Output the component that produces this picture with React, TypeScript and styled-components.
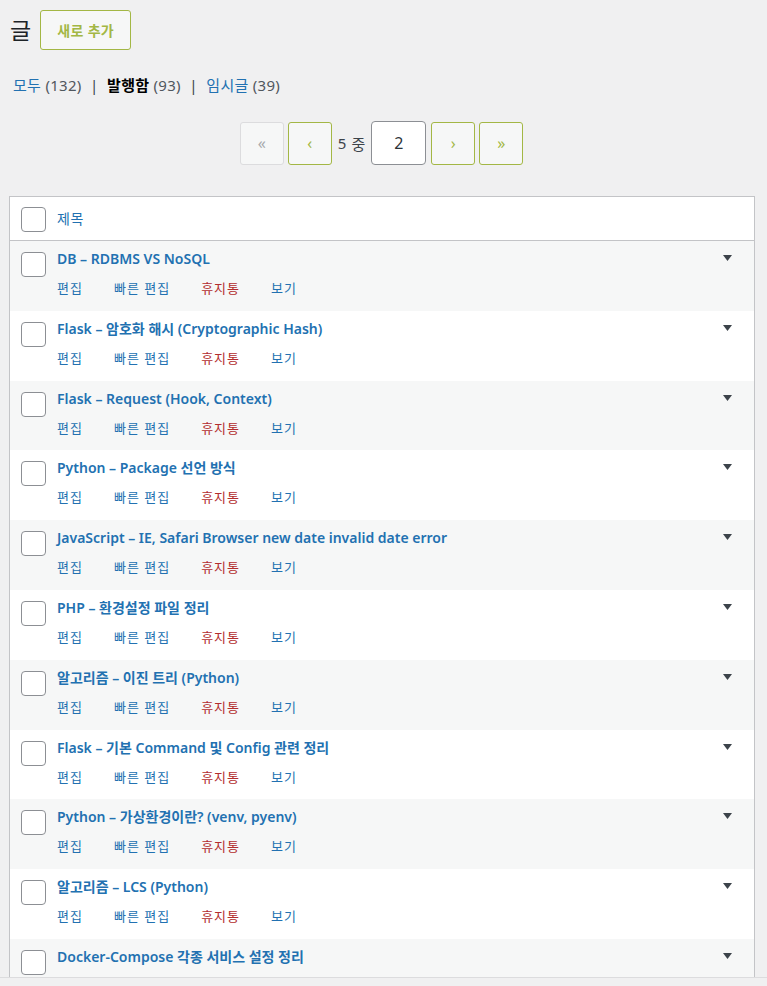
import React from 'react'
import styled, { createGlobalStyle } from 'styled-components'

const GlobalStyle = createGlobalStyle`
  html, body {
    margin: 0;
    padding: 0;
    background: #f0f0f1;
    font-family: "Noto Sans", "Noto Sans CJK KR", sans-serif;
    color: #3c434a;
  }
`

const linkBlue = '#2271b1'
const olive = '#a3b745'

const Page = styled.div`
  padding: 10px 13px 0 9px;
`

const Header = styled.div`
  display: flex;
  align-items: center;
  gap: 9px;
  padding-left: 1px;
`

const Title = styled.h1`
  margin: 0;
  font-size: 23px;
  font-weight: 400;
  color: #1d2327;
  line-height: 40px;
`

const AddButton = styled.a`
  display: inline-flex;
  align-items: center;
  justify-content: center;
  box-sizing: border-box;
  width: 91px;
  height: 40px;
  border: 1px solid ${olive};
  border-radius: 3px;
  background: #f6f7f7;
  color: ${olive};
  font-size: 14px;
  font-weight: 600;
  letter-spacing: 0.3px;
`

const Filters = styled.ul`
  display: flex;
  list-style: none;
  margin: 23px 0 0 4px;
  padding: 0;
  font-size: 15px;
  line-height: 24px;
  letter-spacing: 0.3px;
  color: #50575e;
`

const Filter = styled.li<{ $current?: boolean }>`
  white-space: pre;
  a {
    color: ${({ $current }) => ($current ? '#000' : linkBlue)};
    font-weight: ${({ $current }) => ($current ? 700 : 400)};
  }
`

const Separator = styled.li`
  white-space: pre;
  color: #3c434a;
`

const Pager = styled.div`
  display: flex;
  justify-content: center;
  align-items: center;
  margin: 24px 0 31px 4px;
  font-size: 14px;
  color: #3c434a;
`

const PageButton = styled.span<{ $disabled?: boolean }>`
  display: inline-flex;
  align-items: center;
  justify-content: center;
  box-sizing: border-box;
  width: 44px;
  height: 43px;
  margin-right: 4px;
  border: 1px solid ${({ $disabled }) => ($disabled ? '#dcdcde' : olive)};
  border-radius: 3px;
  background: #f6f7f7;
  color: ${({ $disabled }) => ($disabled ? '#a7aaad' : olive)};
  font-size: 16px;
`

const PageText = styled.span`
  display: inline-flex;
  align-items: center;
  gap: 5px;
  margin: 0 3px 0 2px;
  font-size: 15px;
`

const PageInput = styled.span`
  display: inline-flex;
  align-items: center;
  justify-content: center;
  box-sizing: border-box;
  width: 55px;
  height: 44px;
  margin-left: 3px;
  margin-right: 5px;
  border: 1px solid #8c8f94;
  border-radius: 4px;
  background: #fff;
  font-size: 16px;
  color: #2c3338;
`

const Table = styled.div`
  width: 746px;
  box-sizing: border-box;
  border: 1px solid #c3c4c7;
  background: #fff;
`

const HeadRow = styled.div`
  display: flex;
  height: 44px;
  box-sizing: border-box;
  border-bottom: 1px solid #c3c4c7;
`

const CheckCell = styled.div<{ $top: number }>`
  width: 47px;
  flex: none;
  padding: ${({ $top }) => $top}px 0 0 11px;
  box-sizing: border-box;
`

const Checkbox = styled.span`
  display: block;
  width: 25px;
  height: 25px;
  box-sizing: border-box;
  border: 1px solid #8c8f94;
  border-radius: 4px;
  background: #fff;
`

const HeadLabel = styled.div`
  padding-top: 11px;
  font-size: 14px;
  color: ${linkBlue};
  letter-spacing: 0.5px;
`

const Row = styled.div<{ $alt: boolean }>`
  display: flex;
  height: 69.8px;
  background: ${({ $alt }) => ($alt ? '#f6f7f7' : '#fff')};
`

const RowBody = styled.div`
  flex: 1;
  padding-top: 8px;
`

const RowTitle = styled.a`
  display: block;
  font-size: 14px;
  font-weight: 600;
  line-height: 20px;
  color: ${linkBlue};
`

const Actions = styled.div`
  display: flex;
  gap: 31px;
  margin-top: 9px;
  font-size: 13px;
  line-height: 20px;
  letter-spacing: 1px;
`

const Action = styled.a<{ $danger?: boolean }>`
  color: ${({ $danger }) => ($danger ? '#b32d2e' : linkBlue)};
`

const Toggle = styled.div`
  width: 31px;
  flex: none;
  padding-top: 14px;
  box-sizing: border-box;
  svg {
    display: block;
  }
`

const BottomBar = styled.div`
  position: fixed;
  left: 0;
  right: 0;
  bottom: 0;
  height: 8px;
  border-top: 1px solid #dcdcde;
  background: #f0f0f1;
`

const posts = [
  'DB – RDBMS VS NoSQL',
  'Flask – 암호화 해시 (Cryptographic Hash)',
  'Flask – Request (Hook, Context)',
  'Python – Package 선언 방식',
  'JavaScript – IE, Safari Browser new date invalid date error',
  'PHP – 환경설정 파일 정리',
  '알고리즘 – 이진 트리 (Python)',
  'Flask – 기본 Command 및 Config 관련 정리',
  'Python – 가상환경이란? (venv, pyenv)',
  '알고리즘 – LCS (Python)',
  'Docker-Compose 각종 서비스 설정 정리',
]

const Caret = () => (
  <svg width="9" height="6" viewBox="0 0 9 6">
    <path d="M0 0h9L4.5 6z" fill="#3c434a" />
  </svg>
)

export default function App() {
  return (
    <>
      <GlobalStyle />
      <Page>
        <Header>
          <Title>글</Title>
          <AddButton>새로 추가</AddButton>
        </Header>
        <Filters>
          <Filter>
            <a>모두</a> (132)
          </Filter>
          <Separator>{'  |  '}</Separator>
          <Filter $current>
            <a>발행함</a> (93)
          </Filter>
          <Separator>{'  |  '}</Separator>
          <Filter>
            <a>임시글</a> (39)
          </Filter>
        </Filters>
        <Pager>
          <PageButton $disabled>«</PageButton>
          <PageButton>‹</PageButton>
          <PageText>
            <span>5</span>
            <span>중</span>
          </PageText>
          <PageInput>2</PageInput>
          <PageButton>›</PageButton>
          <PageButton>»</PageButton>
        </Pager>
        <Table>
          <HeadRow>
            <CheckCell $top={10}>
              <Checkbox />
            </CheckCell>
            <HeadLabel>제목</HeadLabel>
          </HeadRow>
          {posts.map((title, i) => (
            <Row key={title} $alt={i % 2 === 0}>
              <CheckCell $top={11}>
                <Checkbox />
              </CheckCell>
              <RowBody>
                <RowTitle>{title}</RowTitle>
                {i < posts.length - 1 && (
                  <Actions>
                    <Action>편집</Action>
                    <Action>빠른 편집</Action>
                    <Action $danger>휴지통</Action>
                    <Action>보기</Action>
                  </Actions>
                )}
              </RowBody>
              <Toggle>
                <Caret />
              </Toggle>
            </Row>
          ))}
        </Table>
      </Page>
      <BottomBar />
    </>
  )
}
